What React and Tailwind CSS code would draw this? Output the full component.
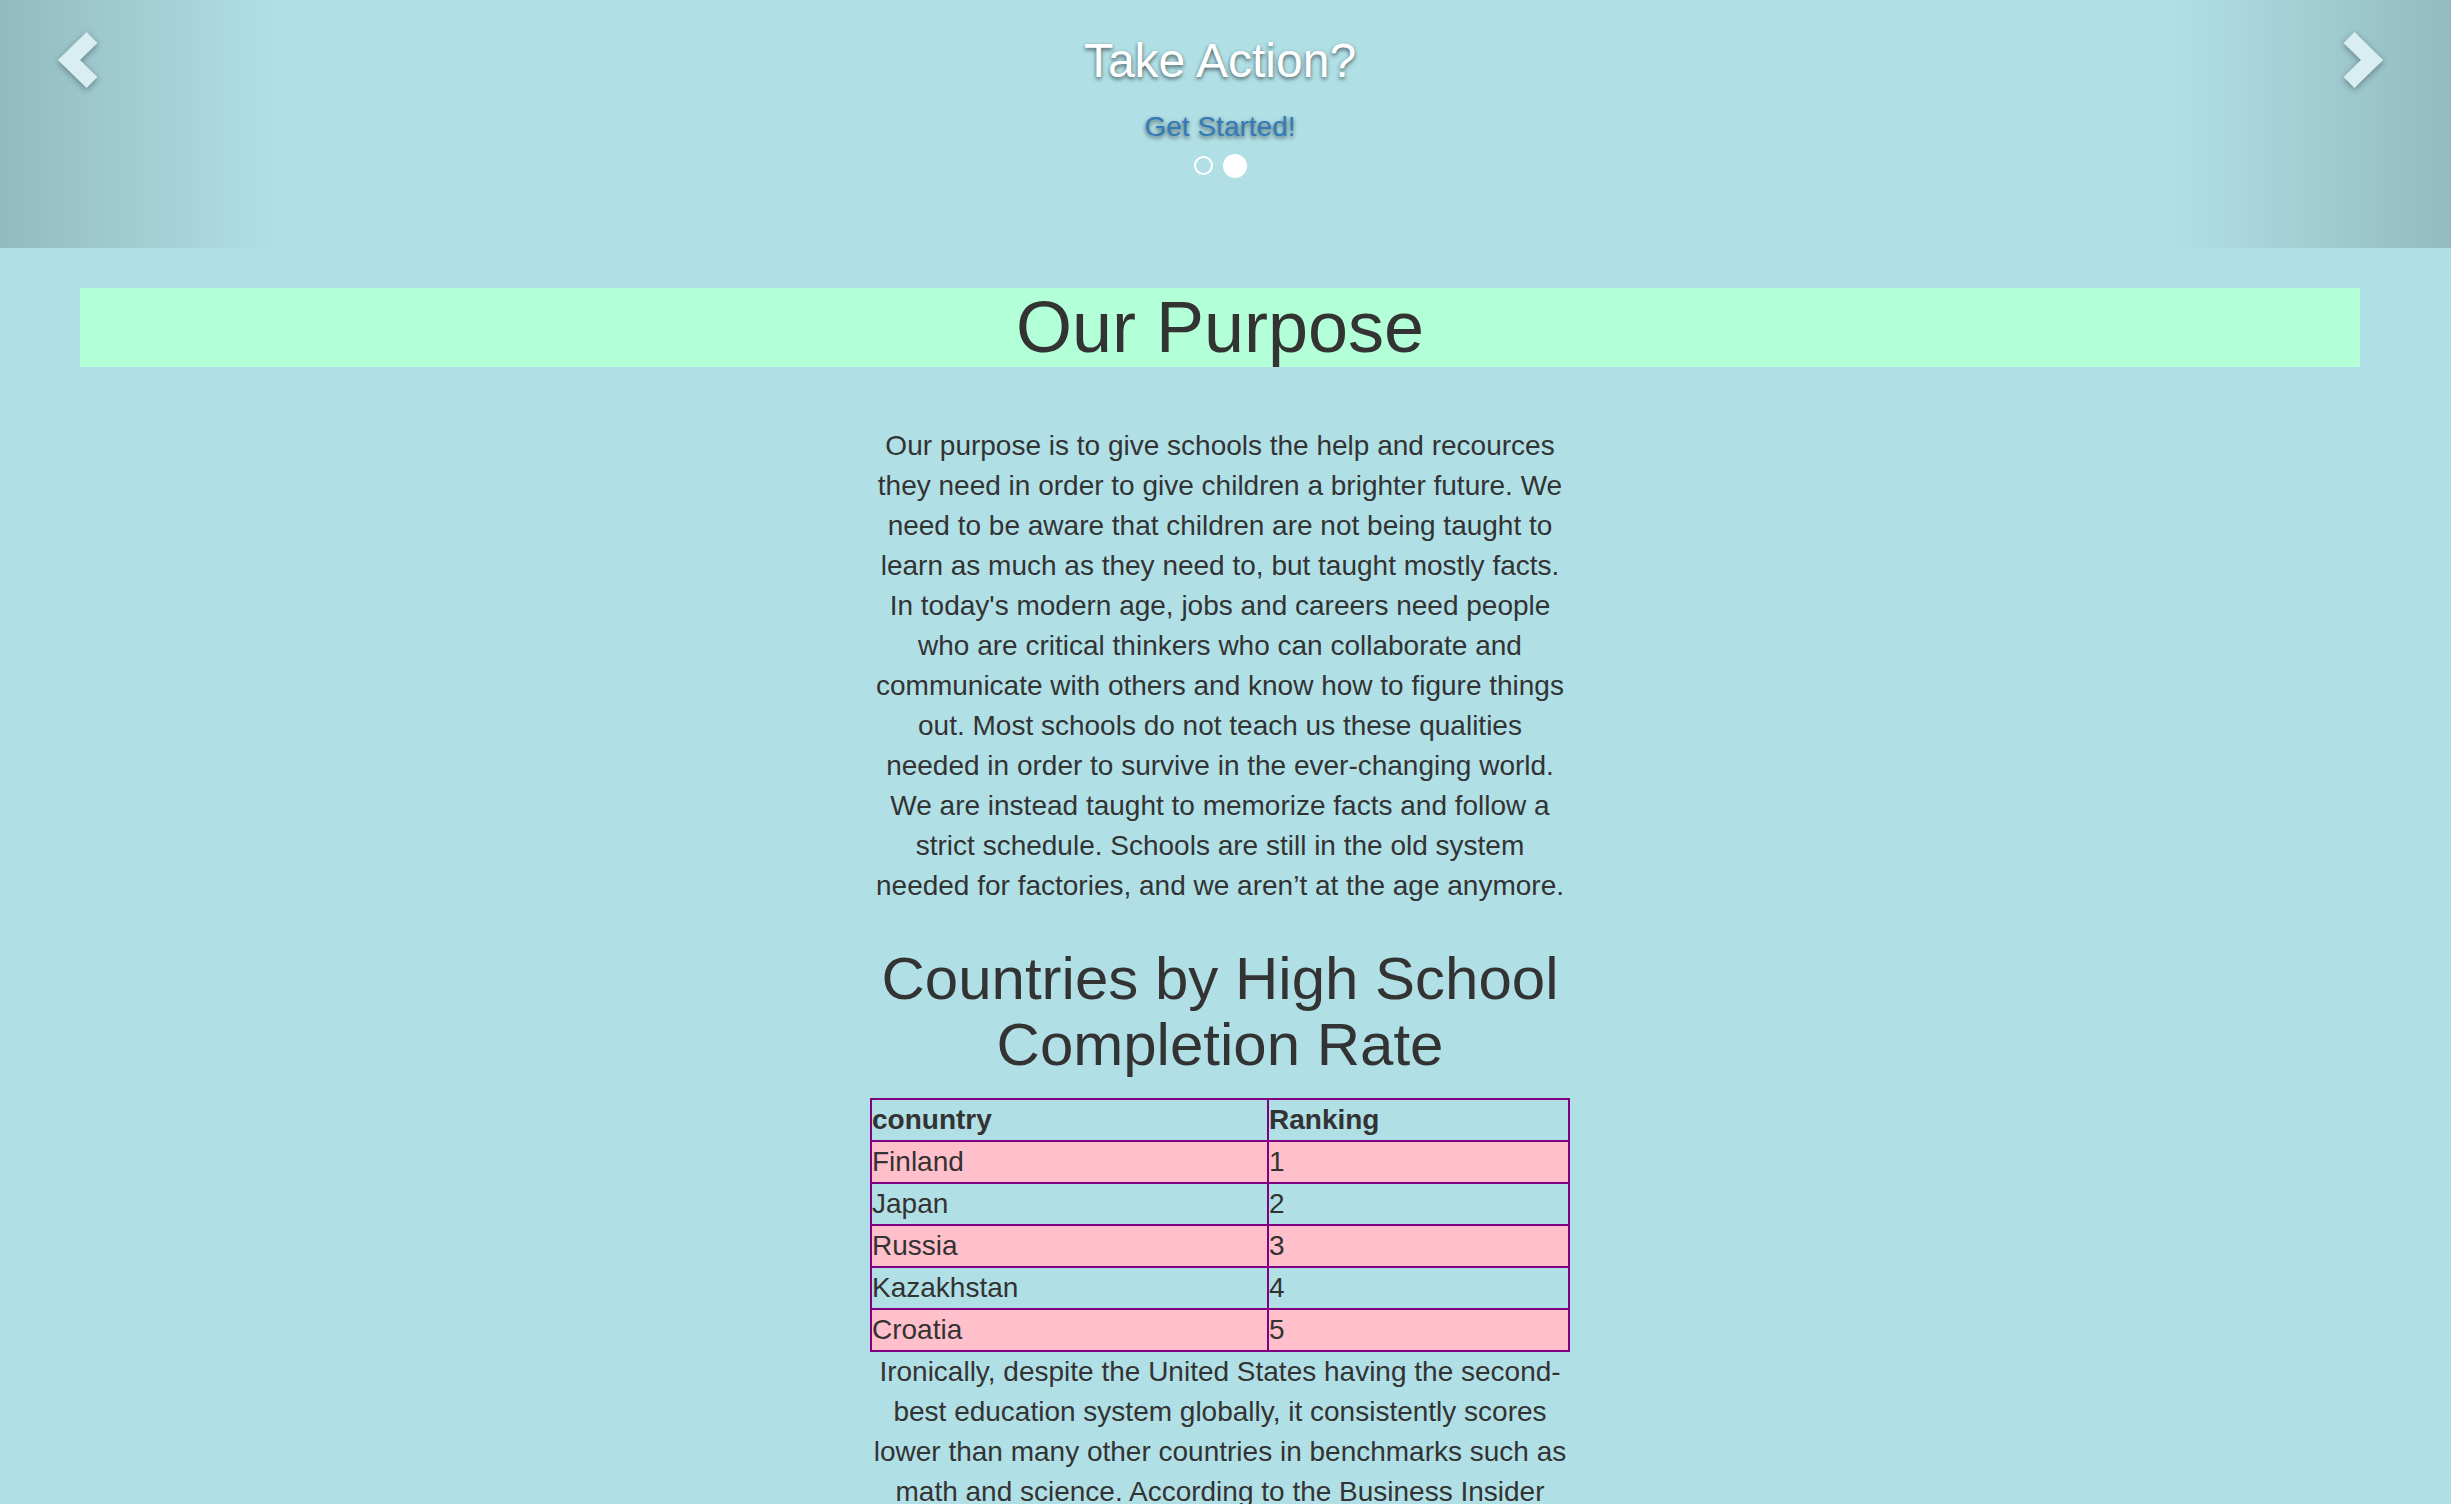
import React from "react";

const rows = [
  ["Finland", "1"],
  ["Japan", "2"],
  ["Russia", "3"],
  ["Kazakhstan", "4"],
  ["Croatia", "5"],
];

const Chevron = ({ dir }) => (
  <svg width="60" height="70" viewBox="0 0 60 70" className="[filter:drop-shadow(0_2px_3px_rgba(0,0,0,0.35))]">
    {dir === "left" ? (
      <polyline points="37,11.5 14,34 37,56.5" fill="none" stroke="#d8eef1" strokeWidth="15.6" strokeLinejoin="miter" />
    ) : (
      <polyline points="23,11.5 46,34 23,56.5" fill="none" stroke="#d8eef1" strokeWidth="15.6" strokeLinejoin="miter" />
    )}
  </svg>
);

const App = () => {
  return (
    <div className="min-h-screen w-full bg-[#b0e0e6] text-[#333] font-['Liberation_Sans',Arial,sans-serif]">
      {/* Carrusel */}
      <div className="relative h-[248px] w-full">
        <div className="absolute left-0 top-0 h-full w-[280px] bg-[linear-gradient(to_right,rgba(0,0,0,0.17),rgba(0,0,0,0))]">
          <div className="absolute left-[55px] top-[26px]">
            <Chevron dir="left" />
          </div>
        </div>
        <div className="absolute right-0 top-0 h-full w-[280px] bg-[linear-gradient(to_left,rgba(0,0,0,0.17),rgba(0,0,0,0))]">
          <div className="absolute right-[65px] top-[26px]">
            <Chevron dir="right" />
          </div>
        </div>
        <div className="w-[2440px] flex flex-col items-center">
          <h3 className="mt-[35px] text-[48px] leading-[1.1] text-white [text-shadow:0_2px_4px_rgba(0,0,0,0.6)]">
            Take Action?
          </h3>
          <a href="#" className="mt-[19px] text-[28px] leading-[40px] text-[#337ab7] [text-shadow:0_2px_4px_rgba(0,0,0,0.6)]">
            Get Started!
          </a>
          <div className="mt-[7px] flex items-center gap-[10px] h-[24px]">
            <span className="block w-[19px] h-[19px] rounded-full border-2 border-white" />
            <span className="block w-[24px] h-[24px] rounded-full bg-white" />
          </div>
        </div>
      </div>

      <div className="w-[2440px]">
        <h1 className="ml-[80px] mt-[40px] w-[2280px] h-[79px] bg-[#b3ffd7] text-center text-[72px] leading-[1.1]">
          Our Purpose
        </h1>

        <div className="mx-auto w-[700px] text-center text-[28px] leading-[40px]">
          <p className="mt-[59px]">
            Our purpose is to give schools the help and recources they need in order to give children a brighter future. We need to be aware that children are not being taught to learn as much as they need to, but taught mostly facts. In today's modern age, jobs and careers need people who are critical thinkers who can collaborate and communicate with others and know how to figure things out. Most schools do not teach us these qualities needed in order to survive in the ever-changing world. We are instead taught to memorize facts and follow a strict schedule. Schools are still in the old system needed for factories, and we aren’t at the age anymore.
          </p>

          <h2 className="mt-[40px] mb-[20px] text-[60px] leading-[1.1]">
            Countries by High School Completion Rate
          </h2>

          <table className="w-[700px] border-collapse border-2 border-[#800080] text-left">
            <thead>
              <tr>
                <th className="w-[397px] border-2 border-[#800080] p-0 font-bold">conuntry</th>
                <th className="border-2 border-[#800080] p-0 font-bold">Ranking</th>
              </tr>
            </thead>
            <tbody>
              {rows.map(([c, r], i) => (
                <tr key={c} className={i % 2 === 0 ? "bg-[#ffc0cb]" : ""}>
                  <td className="border-2 border-[#800080] p-0">{c}</td>
                  <td className="border-2 border-[#800080] p-0">{r}</td>
                </tr>
              ))}
            </tbody>
          </table>

          <p>
            Ironically, despite the United States having the second-best education system globally, it consistently scores lower than many other countries in benchmarks such as math and science. According to the Business Insider
          </p>
        </div>
      </div>
    </div>
  );
};

export default App;
